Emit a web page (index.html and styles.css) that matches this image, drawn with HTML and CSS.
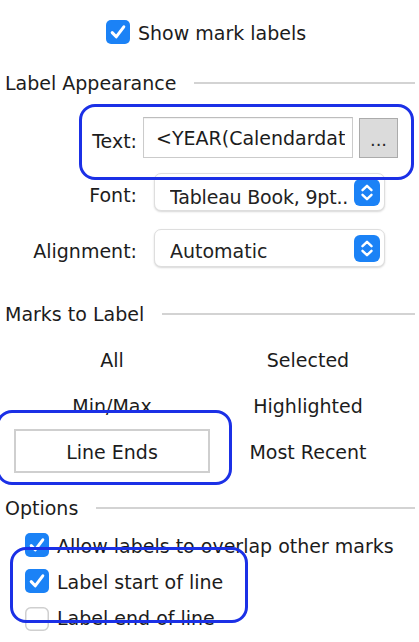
FILE: index.html
```html
<!DOCTYPE html>
<html lang="en">
<head>
<meta charset="utf-8">
<title>Label settings</title>
<link rel="stylesheet" href="styles.css">
</head>
<body>
<div class="panel">
  <div class="show-row">
    <svg class="cb" viewBox="0 0 24 24" width="24" height="24"><rect width="24" height="24" rx="5" fill="#1b82f6"/><path d="M6.2 12.6l4 4.2L17.8 6.8" fill="none" stroke="#fff" stroke-width="3" stroke-linecap="round" stroke-linejoin="round"/></svg>
    <span class="cb-label">Show mark labels</span>
  </div>

  <div class="section-head"><span class="section-title">Label Appearance</span><span class="rule"></span></div>

  <div class="form-row row-text">
    <span class="form-label">Text:</span>
    <div class="text-field"><span class="text-value">&lt;YEAR(Calendardate)&gt;</span></div>
    <div class="dots-btn">...</div>
  </div>

  <div class="form-row row-font">
    <span class="form-label">Font:</span>
    <div class="select">
      <span class="select-value value-font">Tableau Book, 9pt..</span>
      <svg class="stepper" viewBox="0 0 26 27" width="26" height="27"><rect width="26" height="27" rx="6" fill="#1b82f6"/><path d="M8.5 11.2L13 6.8l4.5 4.4M8.5 15.8l4.5 4.4 4.5-4.4" fill="none" stroke="#fff" stroke-width="2.4" stroke-linecap="round" stroke-linejoin="round"/></svg>
    </div>
  </div>

  <div class="form-row row-align">
    <span class="form-label">Alignment:</span>
    <div class="select">
      <span class="select-value">Automatic</span>
      <svg class="stepper" viewBox="0 0 26 27" width="26" height="27"><rect width="26" height="27" rx="6" fill="#1b82f6"/><path d="M8.5 11.2L13 6.8l4.5 4.4M8.5 15.8l4.5 4.4 4.5-4.4" fill="none" stroke="#fff" stroke-width="2.4" stroke-linecap="round" stroke-linejoin="round"/></svg>
    </div>
  </div>

  <div class="section-head head-marks"><span class="section-title">Marks to Label</span><span class="rule"></span></div>

  <div class="marks">
    <div class="mark">All</div>
    <div class="mark">Selected</div>
    <div class="mark">Min/Max</div>
    <div class="mark">Highlighted</div>
    <div class="mark mark-active">Line Ends</div>
    <div class="mark">Most Recent</div>
  </div>

  <div class="section-head head-options"><span class="section-title">Options</span><span class="rule"></span></div>

  <div class="opt-list">
    <div class="opt">
      <svg class="cb" viewBox="0 0 24 24" width="24" height="24"><rect width="24" height="24" rx="5" fill="#1b82f6"/><path d="M6.2 12.6l4 4.2L17.8 6.8" fill="none" stroke="#fff" stroke-width="3" stroke-linecap="round" stroke-linejoin="round"/></svg>
      <span class="cb-label">Allow labels to overlap other marks</span>
    </div>
    <div class="opt">
      <svg class="cb" viewBox="0 0 24 24" width="24" height="24"><rect width="24" height="24" rx="5" fill="#1b82f6"/><path d="M6.2 12.6l4 4.2L17.8 6.8" fill="none" stroke="#fff" stroke-width="3" stroke-linecap="round" stroke-linejoin="round"/></svg>
      <span class="cb-label">Label start of line</span>
    </div>
    <div class="opt opt-last">
      <svg class="cb" viewBox="0 0 24 24" width="24" height="24"><rect x="0.75" y="0.75" width="22.5" height="22.5" rx="5" fill="#fff" stroke="#cfcfcf" stroke-width="1.5"/></svg>
      <span class="cb-label">Label end of line</span>
    </div>
  </div>

  <div class="annot annot-text"></div>
  <div class="annot annot-ends"></div>
  <div class="annot annot-opts"></div>
</div>
</body>
</html>
```

FILE: styles.css
```css
html, body {
  margin: 0;
  padding: 0;
  background: #ffffff;
}

body {
  font-family: "DejaVu Sans", "Liberation Sans", sans-serif;
  font-size: 19px;
  line-height: 22px;
  color: #1c1c1c;
}

.panel {
  position: relative;
  width: 419px;
  height: 642px;
  overflow: hidden;
  padding-top: 20px;
  box-sizing: border-box;
}

.cb {
  display: block;
  flex: none;
}

.cb-label {
  padding-top: 2px;
  white-space: nowrap;
}

.show-row {
  display: flex;
  align-items: center;
  gap: 8px;
  height: 24px;
  padding-left: 106px;
}

/* section headers */
.section-head {
  display: flex;
  align-items: center;
  gap: 18px;
  height: 22px;
  margin-top: 28px;
  padding: 0 4px 0 5px;
}

.section-title {
  white-space: nowrap;
}

.rule {
  flex: 1;
  height: 2px;
  background: #d3d3d3;
}

.head-marks {
  margin-top: 36px;
}

.head-options {
  margin-top: 24px;
}

/* form rows */
.form-row {
  display: flex;
  align-items: center;
}

.form-label {
  width: 137px;
  flex: none;
  text-align: right;
  white-space: nowrap;
}

.row-text {
  margin-top: 23px;
  height: 41px;
}

.row-text .form-label {
  padding-top: 6px;
}

.text-field {
  margin-left: 6px;
  width: 210px;
  height: 41px;
  box-sizing: border-box;
  border: 1px solid #cbcbcb;
  border-top-color: #bdbdbd;
  box-shadow: inset 0 1px 1px rgba(0, 0, 0, 0.06);
  padding: 6px 7px 0 12px;
  background: #fff;
}

.text-value {
  display: block;
  line-height: 28px;
  overflow: hidden;
  white-space: nowrap;
}

.dots-btn {
  margin-left: 6px;
  width: 39px;
  height: 40px;
  box-sizing: border-box;
  background: #dbdbdb;
  border: 1.5px solid #ababab;
  text-align: center;
  line-height: 42px;
  font-size: 18px;
  color: #2a2a2a;
}

.row-font {
  margin-top: 15px;
  height: 38px;
}

.row-align {
  margin-top: 18px;
  height: 38px;
}

.row-font .form-label,
.row-align .form-label {
  padding-top: 5px;
}

.select {
  margin-left: 17px;
  width: 231px;
  height: 38px;
  box-sizing: border-box;
  border: 1px solid #dedede;
  border-radius: 7px;
  box-shadow: 0 1px 2px rgba(0, 0, 0, 0.16);
  background: #fff;
  display: flex;
  align-items: center;
  padding: 0 4px 0 15px;
}

.select-value {
  flex: 1;
  min-width: 0;
  overflow: hidden;
  white-space: nowrap;
  padding-top: 5px;
  color: #222;
}

.value-font {
  padding-top: 9px;
  letter-spacing: -0.2px;
}

.stepper {
  display: block;
  flex: none;
}

/* marks to label */
.marks {
  margin-top: 12px;
  display: grid;
  grid-template-columns: 196px 196px;
  grid-auto-rows: 44px;
  row-gap: 2px;
  padding-left: 14px;
}

.mark {
  display: flex;
  align-items: center;
  justify-content: center;
  padding-top: 2px;
  white-space: nowrap;
  box-sizing: border-box;
}

.mark-active {
  border: 2px solid #cfcfcf;
  background: #fff;
}

/* options */
.opt-list {
  margin-top: 8px;
  padding-left: 25px;
}

.opt {
  display: flex;
  align-items: center;
  gap: 8px;
  height: 36px;
}

.opt-last .cb {
  margin-top: 3px;
}

/* blue annotation outlines drawn over the panel */
.annot {
  position: absolute;
  box-sizing: border-box;
  border: 3px solid #1b30e6;
  border-radius: 16px;
  pointer-events: none;
}

.annot-text {
  left: 79px;
  top: 104px;
  width: 335px;
  height: 76px;
}

.annot-ends {
  left: -4px;
  top: 410px;
  width: 236px;
  height: 75px;
}

.annot-opts {
  left: 10px;
  top: 547px;
  width: 238px;
  height: 76px;
}
```
